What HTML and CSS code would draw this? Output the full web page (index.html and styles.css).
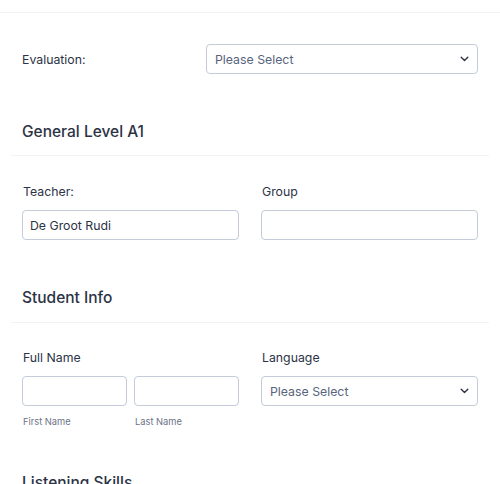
FILE: index.html
```html
<!DOCTYPE html>
<html>
<head>
<meta charset="utf-8">
<link rel="stylesheet" href="styles.css">
</head>
<body>
<div class="topline"></div>
<div class="form">
  <div class="row-eval">
    <label class="label eval-label">Evaluation:</label>
    <div class="select eval-select">
      <span class="placeholder">Please Select</span>
      <svg class="chev" width="9" height="6" viewBox="0 0 9 6"><polyline points="1.2,1.2 4.5,4.4 7.8,1.2" fill="none" stroke="#2c3345" stroke-width="1.4" stroke-linecap="round" stroke-linejoin="round"/></svg>
    </div>
  </div>

  <h2 class="heading h-general">General Level A1</h2>
  <div class="divider"></div>

  <div class="grid2 teacher-row">
    <div class="field">
      <label class="label">Teacher:</label>
      <div class="input"><span class="value">De Groot Rudi</span></div>
    </div>
    <div class="field">
      <label class="label">Group</label>
      <div class="input"></div>
    </div>
  </div>

  <h2 class="heading h-student">Student Info</h2>
  <div class="divider"></div>

  <div class="grid2 name-row">
    <div class="field">
      <label class="label">Full Name</label>
      <div class="name-pair">
        <div class="sub">
          <div class="input"></div>
          <span class="sublabel">First Name</span>
        </div>
        <div class="sub">
          <div class="input"></div>
          <span class="sublabel">Last Name</span>
        </div>
      </div>
    </div>
    <div class="field">
      <label class="label">Language</label>
      <div class="select">
        <span class="placeholder">Please Select</span>
        <svg class="chev" width="9" height="6" viewBox="0 0 9 6"><polyline points="1.2,1.2 4.5,4.4 7.8,1.2" fill="none" stroke="#2c3345" stroke-width="1.4" stroke-linecap="round" stroke-linejoin="round"/></svg>
      </div>
    </div>
  </div>

  <h2 class="heading h-listening">Listening Skills</h2>
</div>
</body>
</html>
```
FILE: styles.css
```css
html, body {
  margin: 0;
  padding: 0;
  background: #ffffff;
  font-family: Inter, "Noto Sans", sans-serif;
  color: #2c3345;
}
body {
  width: 500px;
  height: 484px;
  overflow: hidden;
}
.topline {
  height: 12px;
  border-bottom: 1px solid #f1f2f5;
}
.form {
  padding: 0 22px;
}
.label {
  display: block;
  font-size: 12.3px;
  line-height: 16px;
  font-weight: 400;
  color: #2c3345;
}
.row-eval {
  display: flex;
  align-items: center;
  margin-top: 31px;
}
.eval-label {
  width: 184px;
  flex: none;
  padding-top: 2px;
}
.select, .input {
  box-sizing: border-box;
  height: 30px;
  border: 1px solid #c3cad8;
  border-radius: 4px;
  background: #fff;
  display: flex;
  align-items: center;
}
.select {
  justify-content: space-between;
  padding: 0 8px 0 8px;
}
.eval-select {
  width: 272px;
}
.placeholder {
  font-size: 12.3px;
  color: #57647e;
}
.value {
  font-size: 12.3px;
  color: #2c3345;
  padding-left: 7px;
}
.chev {
  display: block;
}
.heading {
  margin: 0;
  font-size: 15.5px;
  line-height: 20px;
  font-weight: 500;
  color: #2c3345;
}
.h-general { margin-top: 48px; }
.h-student { margin-top: 48px; }
.h-listening { margin-top: 45px; }
.divider {
  margin: 13px -11px 0;
  border-top: 1px solid #f1f2f5;
}
.h-student + .divider { margin-top: 14px; }
.grid2 {
  display: grid;
  grid-template-columns: 1fr 1fr;
  column-gap: 22px;
}
.teacher-row { margin-top: 28px; }
.name-row { margin-top: 27px; }
.field .label {
  margin-bottom: 10px;
  padding-left: 1px;
}
.name-pair {
  display: grid;
  grid-template-columns: 1fr 1fr;
  column-gap: 7px;
}
.sub {
  display: flex;
  flex-direction: column;
}
.sublabel {
  margin-top: 10px;
  padding-left: 1px;
  font-size: 9.3px;
  line-height: 12px;
  color: #6c7386;
}
```
